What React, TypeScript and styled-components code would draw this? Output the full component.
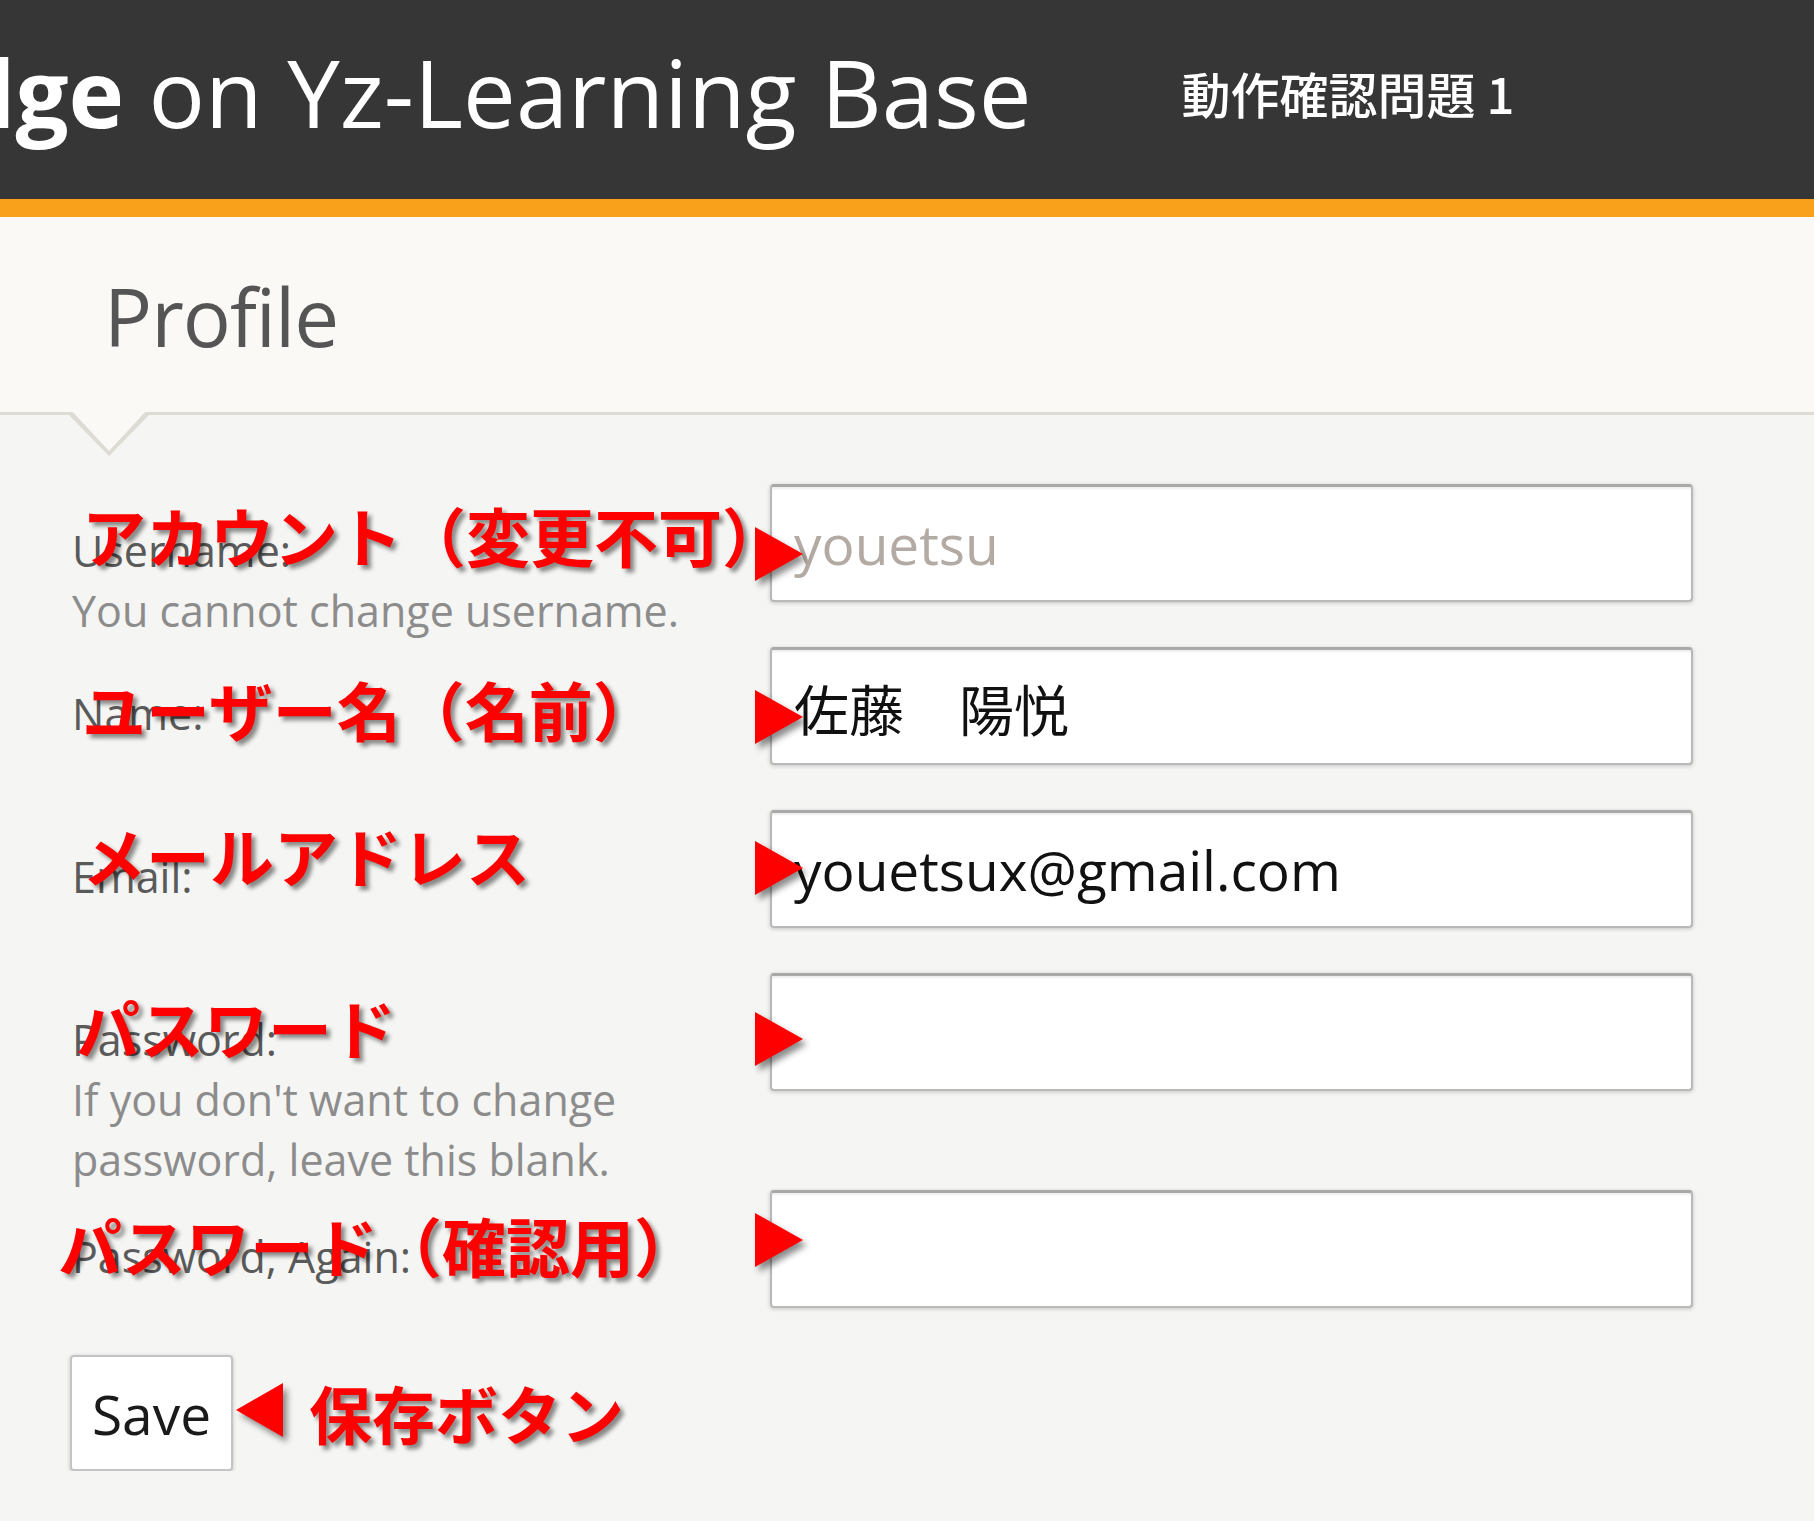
import React from 'react';
import styled, { createGlobalStyle } from 'styled-components';

type Field = {
  label: string;
  help?: string;
  value?: string;
  type?: string;
  disabled?: boolean;
  note: string;
  noteTop: number;
  noteLeft: number;
  arrowTop: number;
};

const fields: Field[] = [
  {
    label: 'Username:',
    help: 'You cannot change username.',
    value: 'youetsu',
    disabled: true,
    note: 'アカウント（変更不可）',
    noteTop: 18,
    noteLeft: 82,
    arrowTop: 43,
  },
  {
    label: 'Name:',
    value: '佐藤　陽悦',
    note: 'ユーザー名（名前）',
    noteTop: 29,
    noteLeft: 82,
    arrowTop: 43,
  },
  {
    label: 'Email:',
    value: 'youetsux@gmail.com',
    note: 'メールアドレス',
    noteTop: 12,
    noteLeft: 82,
    arrowTop: 31,
  },
  {
    label: 'Password:',
    help: "If you don't want to change password, leave this blank.",
    type: 'password',
    note: 'パスワード',
    noteTop: 21,
    noteLeft: 76,
    arrowTop: 39,
  },
  {
    label: 'Password, Again:',
    type: 'password',
    note: 'パスワード（確認用）',
    noteTop: 22,
    noteLeft: 58,
    arrowTop: 23,
  },
];

function App() {
  return (
    <>
      <GlobalStyle />
      <Header>
        <SiteTitle>
          <b>dge</b> on Yz-Learning Base
        </SiteTitle>
        <ProblemName>動作確認問題 1</ProblemName>
      </Header>
      <PageTitleBar>
        <PageTitle>Profile</PageTitle>
      </PageTitleBar>
      <Form>
        {fields.map((f) => (
          <FormRow key={f.label}>
            <LabelCell>
              <FieldLabel>{f.label}</FieldLabel>
              {f.help && <HelpText>{f.help}</HelpText>}
            </LabelCell>
            <InputCell>
              <TextInput
                type={f.type || 'text'}
                defaultValue={f.value}
                disabled={f.disabled}
                $disabled={f.disabled}
              />
            </InputCell>
            <Note $top={f.noteTop} $left={f.noteLeft}>
              {f.note}
            </Note>
            <RightArrow $top={f.arrowTop} />
          </FormRow>
        ))}
        <SaveRow>
          <SaveButton type="button">Save</SaveButton>
          <LeftArrow />
          <SaveNote>保存ボタン</SaveNote>
        </SaveRow>
      </Form>
    </>
  );
}

const GlobalStyle = createGlobalStyle`
  html, body {
    margin: 0;
    padding: 0;
    background: #f5f5f3;
  }
  body {
    font-family: 'Open Sans', 'Noto Sans CJK JP', sans-serif;
    overflow: hidden;
  }
`;

const Header = styled.header`
  display: flex;
  align-items: center;
  height: 185px;
  padding-bottom: 14px;
  box-sizing: content-box;
  background: #363636;
  border-bottom: 18px solid #f9a11b;
  overflow: hidden;
  white-space: nowrap;
`;

const SiteTitle = styled.h1`
  margin: 0 0 0 -44px;
  font-family: 'Open Sans', sans-serif;
  font-size: 94px;
  font-weight: 400;
  line-height: 1.2;
  color: #fff;

  b {
    font-weight: 700;
  }
`;

const ProblemName = styled.div`
  margin-left: 150px;
  font-family: 'Noto Sans CJK JP', sans-serif;
  font-size: 49px;
  font-weight: 500;
  color: #fff;
`;

const PageTitleBar = styled.div`
  position: relative;
  height: 198px;
  padding: 59px 0 0 104px;
  box-sizing: border-box;
  background: #faf9f6;
  border-bottom: 3px solid #dedbd4;

  &::before,
  &::after {
    content: '';
    position: absolute;
    width: 0;
    height: 0;
    border-style: solid;
    border-color: transparent;
  }
  &::before {
    left: 66px;
    top: 100%;
    border-width: 44px 43px 0 43px;
    border-top-color: #dedbd4;
  }
  &::after {
    left: 70px;
    top: 100%;
    margin-top: -3px;
    border-width: 42px 39px 0 39px;
    border-top-color: #faf9f6;
  }
`;

const PageTitle = styled.h2`
  margin: 0;
  font-family: 'Open Sans', sans-serif;
  font-size: 80px;
  font-weight: 400;
  line-height: 1;
  color: #555;
  letter-spacing: -1px;
`;

const Form = styled.form`
  padding: 69px 0 0 70px;
`;

const FormRow = styled.div`
  position: relative;
  display: flex;
  align-items: flex-start;
`;

const LabelCell = styled.div`
  padding: 37px 40px 0 2px;
  box-sizing: border-box;
  flex: 0 0 700px;
`;

const FieldLabel = styled.div`
  font-size: 43px;
  line-height: 60px;
  color: #5a5a5a;
`;

const HelpText = styled.div`
  font-size: 43px;
  line-height: 60px;
  color: #8c8c8c;
`;

const InputCell = styled.div`
  flex: 0 0 923px;
  padding-bottom: 45px;
`;

const TextInput = styled.input<{ $disabled?: boolean }>`
  display: block;
  width: 100%;
  height: 118px;
  box-sizing: border-box;
  padding: 0 22px;
  font-family: 'Open Sans', 'Noto Sans CJK JP', sans-serif;
  font-size: 55px;
  color: ${(p) => (p.$disabled ? '#b3aba3' : '#111')};
  -webkit-text-fill-color: ${(p) => (p.$disabled ? '#b3aba3' : '#111')};
  background: #fff;
  border: 2px solid #b9b9b9;
  border-top: 3px solid #a9a9a9;
  border-radius: 4px;
  box-shadow: 0 1px 4px rgba(0, 0, 0, 0.2), inset 0 2px 2px rgba(0, 0, 0, 0.07);
  outline: none;
`;

const Note = styled.div<{ $top: number; $left: number }>`
  position: absolute;
  top: ${(p) => p.$top}px;
  left: ${(p) => p.$left - 70}px;
  font-family: 'Noto Sans CJK JP', sans-serif;
  font-size: 64px;
  font-weight: 700;
  line-height: 1;
  color: #ff0000;
  white-space: nowrap;
  text-shadow: 4px 4px 4px rgba(0, 0, 0, 0.45);
  pointer-events: none;
`;

const RightArrow = styled.div<{ $top: number }>`
  position: absolute;
  top: ${(p) => p.$top}px;
  left: 685px;
  width: 0;
  height: 0;
  border-style: solid;
  border-width: 27px 0 27px 48px;
  border-color: transparent transparent transparent #ff0000;
  filter: drop-shadow(4px 5px 3px rgba(0, 0, 0, 0.45));
`;

const SaveRow = styled.div`
  display: flex;
  align-items: center;
  padding-top: 2px;
`;

const SaveButton = styled.button`
  width: 163px;
  height: 116px;
  padding: 0;
  font-family: 'Open Sans', sans-serif;
  font-size: 55px;
  color: #1a1a1a;
  background: #fff;
  border: 2px solid #c4c4c4;
  border-radius: 4px;
  box-shadow: 0 1px 4px rgba(0, 0, 0, 0.2);
`;

const LeftArrow = styled.div`
  margin: -6px 0 0 3px;
  width: 0;
  height: 0;
  border-style: solid;
  border-width: 27px 47px 27px 0;
  border-color: transparent #ff0000 transparent transparent;
  filter: drop-shadow(4px 5px 3px rgba(0, 0, 0, 0.45));
`;

const SaveNote = styled.div`
  margin: -4px 0 0 26px;
  font-family: 'Noto Sans CJK JP', sans-serif;
  font-size: 63px;
  font-weight: 700;
  line-height: 1;
  color: #ff0000;
  text-shadow: 4px 4px 4px rgba(0, 0, 0, 0.45);
`;

export default App;
